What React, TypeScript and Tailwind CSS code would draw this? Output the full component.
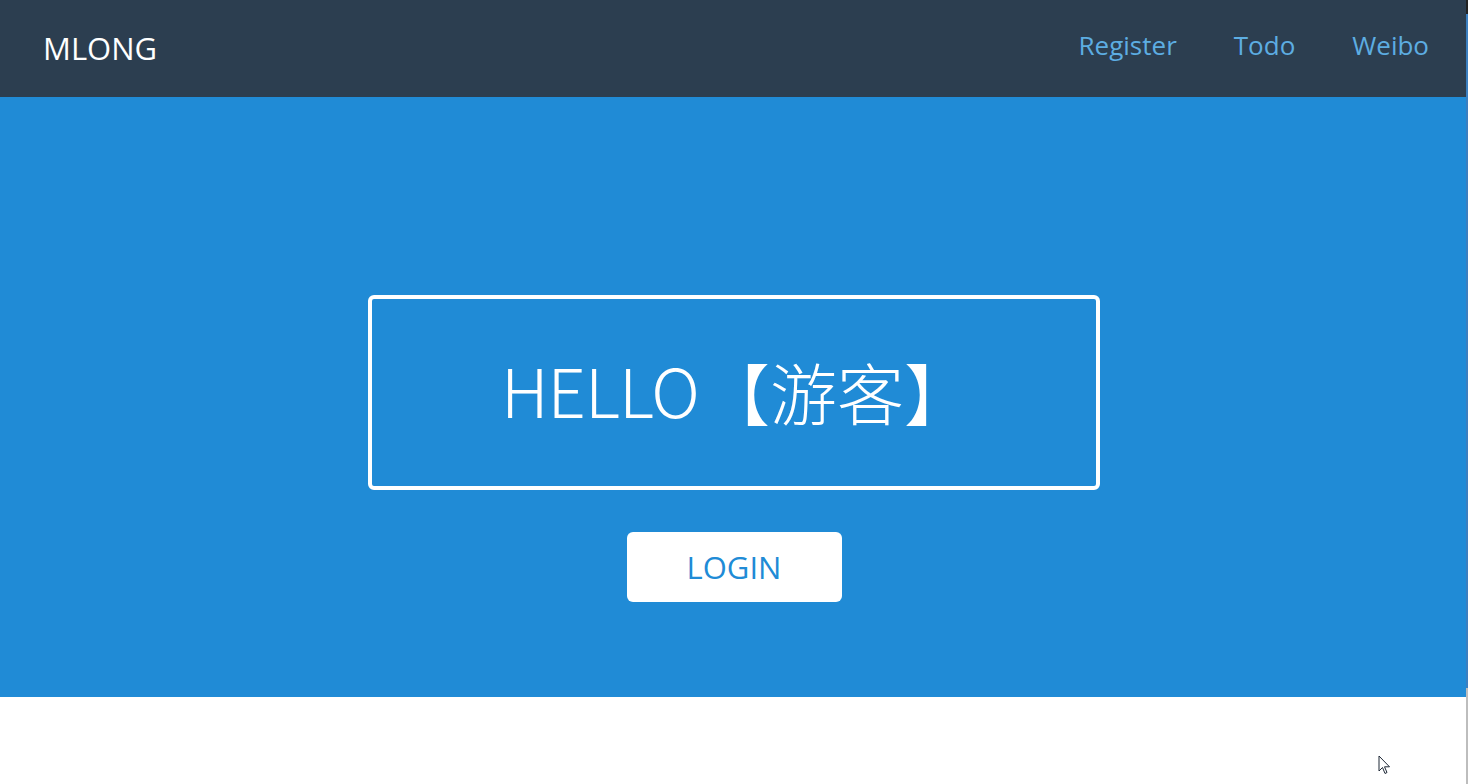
const sans = "font-['Open_Sans','Noto_Sans_CJK_SC',sans-serif]";

const NavLink = ({ label }: { label: string }) => (
	<a href="#" className="text-[26px] text-[#5dade2] leading-none">
		{label}
	</a>
);

export default function App() {
	return (
		<div className={`relative w-[1468px] h-[784px] bg-white overflow-hidden ${sans}`}>
			<header className="h-[97px] bg-[#2c3e50] flex items-center justify-between pl-[43px] pr-[39px]">
				<div className="text-[31px] text-white leading-none -mt-[1px]">MLONG</div>
				<nav className="flex items-center gap-[57px] -mt-[8px]">
					<NavLink label="Register" />
					<NavLink label="Todo" />
					<NavLink label="Weibo" />
				</nav>
			</header>

			<section className="h-[600px] bg-[#208bd6] flex flex-col items-center pt-[198px]">
				<div className="w-[732px] h-[195px] border-4 border-white rounded-[6px] flex items-center justify-center text-white font-['Noto_Sans_CJK_SC',sans-serif]">
					<span className="text-[67px] font-light leading-none tracking-[-1px] -mt-[9px] ml-[4px]">
						HELLO
					</span>
					<span className="text-[67px] font-light leading-none ml-[4px] -mt-[4px]">
						【游客】
					</span>
				</div>
				<button className="mt-[42px] w-[215px] h-[70px] bg-white rounded-[6px] text-[#208bd6] text-[31px] leading-none flex items-center justify-center">
					LOGIN
				</button>
			</section>

			{/* scrollbar edge */}
			<div className="absolute right-0 top-0 w-[2px] h-full flex flex-col">
				<div className="h-[14px] bg-[#222]" />
				<div className="h-[674px] bg-[#3b7fc0]" />
				<div className="flex-1 bg-[#bdbdbd]" />
			</div>

			{/* mouse pointer */}
			<svg className="absolute left-[1378px] top-[755px]" width="13" height="20" viewBox="0 0 13 20">
				<path d="M1 1 L1 16 L4.5 12.5 L7 18.5 L9 17.5 L6.5 11.8 L11.5 11.8 Z" fill="#fff" stroke="#1f2937" strokeWidth="1" strokeLinejoin="round" />
			</svg>
		</div>
	);
}
